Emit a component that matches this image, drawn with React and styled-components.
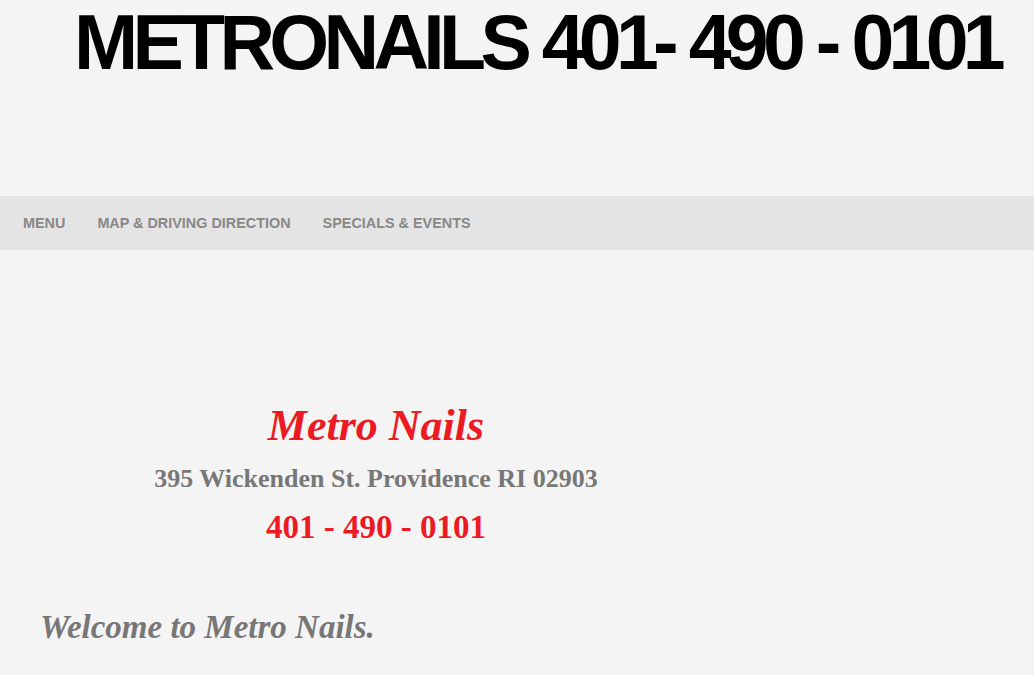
import React from "react";
import styled, { createGlobalStyle } from "styled-components";

const Global = createGlobalStyle`
  html, body { margin: 0; padding: 0; background: #f4f4f4; }
  body { font-family: "Liberation Sans", Arial, sans-serif; }
`;

const Page = styled.div`
  width: 1034px;
  min-height: 675px;
  background: #f4f4f4;
  overflow: hidden;
`;

const Header = styled.header`
  height: 196px;
  display: flex;
  align-items: flex-start;
  padding-left: 74px;
  box-sizing: border-box;
`;

const Title = styled.h1`
  margin: 0;
  margin-top: 2px;
  font-family: "Liberation Sans", Arial, sans-serif;
  font-weight: 700;
  font-size: 77px;
  line-height: 80px;
  letter-spacing: -5.7px;
  color: #000;
  white-space: nowrap;
`;

const Nav = styled.nav`
  height: 54px;
  background: #e4e4e4;
  display: flex;
  align-items: center;
  padding-left: 23px;
  gap: 32px;
`;

const NavItem = styled.a`
  font-family: "Liberation Sans", Arial, sans-serif;
  font-weight: 700;
  font-size: 14.4px;
  color: #888;
  text-decoration: none;
  text-transform: uppercase;
`;

const Content = styled.main`
  padding-top: 150px;
`;

const Info = styled.section`
  width: 752px;
  display: flex;
  flex-direction: column;
  align-items: center;
  text-align: center;
  font-family: "Liberation Serif", "Times New Roman", serif;
`;

const Name = styled.h2`
  margin: 0;
  font-style: italic;
  font-weight: 700;
  font-size: 44px;
  line-height: 52px;
  color: #ec1b23;
`;

const Address = styled.p`
  margin: 6px 0 0;
  font-weight: 700;
  font-size: 26px;
  line-height: 42px;
  color: #777;
`;

const Phone = styled.p`
  margin: 0;
  font-weight: 700;
  font-size: 33px;
  line-height: 54px;
  color: #ec1b23;
`;

const Welcome = styled.h3`
  margin: 53px 0 0 40px;
  font-family: "Liberation Serif", "Times New Roman", serif;
  font-style: italic;
  font-weight: 700;
  font-size: 33px;
  line-height: 40px;
  color: #777;
`;

export default function App() {
  return (
    <Page>
      <Global />
      <Header>
        <Title>METRONAILS 401- 490 - 0101</Title>
      </Header>
      <Nav>
        <NavItem href="#">Menu</NavItem>
        <NavItem href="#">Map &amp; Driving Direction</NavItem>
        <NavItem href="#">Specials &amp; Events</NavItem>
      </Nav>
      <Content>
        <Info>
          <Name>Metro Nails</Name>
          <Address>395 Wickenden St. Providence RI 02903</Address>
          <Phone>401 - 490 - 0101</Phone>
        </Info>
        <Welcome>Welcome to Metro Nails.</Welcome>
      </Content>
    </Page>
  );
}
